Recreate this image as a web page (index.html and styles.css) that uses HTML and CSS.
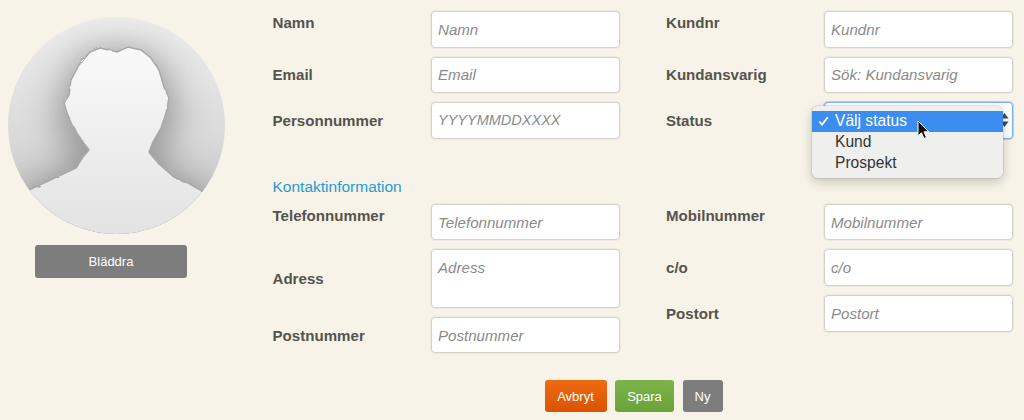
FILE: index.html
```html
<!DOCTYPE html>
<html lang="sv">
<head>
<meta charset="utf-8">
<title>Kund</title>
<link rel="stylesheet" href="styles.css">
</head>
<body>
<div class="page">
  <aside class="photo">
    <svg class="avatar" width="217" height="217" viewBox="8 17 217 217" aria-hidden="true">
      <defs>
        <linearGradient id="bg" x1="0" y1="0" x2="0" y2="1">
          <stop offset="0" stop-color="#ededed"/>
          <stop offset="0.55" stop-color="#dadada"/>
          <stop offset="1" stop-color="#bdbdbd"/>
        </linearGradient>
        <linearGradient id="fig" x1="0" y1="0" x2="0" y2="1">
          <stop offset="0" stop-color="#f9f9f9"/>
          <stop offset="1" stop-color="#e2e2e3"/>
        </linearGradient>
        <clipPath id="disc"><circle cx="116.500" cy="125.500" r="108.500"/></clipPath>
        <filter id="soft" x="-40%" y="-40%" width="180%" height="180%"><feGaussianBlur stdDeviation="17"/></filter>
        <filter id="rough" x="-5%" y="-5%" width="110%" height="110%">
          <feTurbulence type="fractalNoise" baseFrequency="0.13" numOctaves="2" seed="4"/>
          <feDisplacementMap in="SourceGraphic" scale="3"/>
          <feGaussianBlur stdDeviation="0.6"/>
        </filter>
      </defs>
      <g clip-path="url(#disc)">
        <rect x="8" y="17" width="217" height="217" fill="url(#bg)"/>
        <path transform="translate(0 10)" d="M30 189L63 173L75 168L82 157L88 150L82 142L72 125L68 113L65 103L70 95L72 80L80 65L90 52L100 48L117 52L128 47L140 50L150 58L158 70L163 87L168 98L165 113L160 128L152 142L148 152L157 163L173 177L187 183L203 191L203 240L30 240Z" fill="#7c7c7c" stroke="#7c7c7c" stroke-width="20" opacity="0.68" filter="url(#soft)"/>
        <g filter="url(#rough)">
          <path d="M29 190L63 174L76 168L83 157L89 150L83 142L72 125L67 113L64 103L69 95L71 80L79 65L90 52L100 48L117 52L128 47L141 50L151 58L159 70L164 87L169 98L166 113L161 128L153 142L149 152L158 163L174 177L188 183L204 192L230 240L10 240Z" fill="url(#fig)" stroke="#a8a8a8" stroke-width="1.500"/>
        </g>
      </g>
    </svg>
    <button class="btn btn-browse" type="button">Bläddra</button>
  </aside>

  <main class="content">
    <section class="grid">
      <div class="col">
        <div class="row"><label class="lbl lbl-high">Namn</label><input class="field" placeholder="Namn"></div>
        <div class="row"><label class="lbl">Email</label><input class="field" placeholder="Email"></div>
        <div class="row"><label class="lbl">Personnummer</label><input class="field field-date" placeholder="YYYYMMDDXXXX"></div>
      </div>
      <div class="col">
        <div class="row"><label class="lbl lbl-high">Kundnr</label><input class="field" placeholder="Kundnr"></div>
        <div class="row"><label class="lbl">Kundansvarig</label><input class="field" placeholder="Sök: Kundansvarig"></div>
        <div class="row">
          <label class="lbl">Status</label>
          <div class="select">
            <svg class="updown" width="9" height="16" viewBox="0 0 9 16" aria-hidden="true"><path d="M4.500 1L8.500 6.500H.5ZM4.500 15L.5 9.500H8.500Z" fill="#4a4a4a"/></svg>
            <div class="menu">
              <div class="opt opt-on"><svg class="tick" width="11" height="10" viewBox="0 0 11 10" aria-hidden="true"><path d="M1.200 5.500L4 8.500L9.800 1.200" fill="none" stroke="#fff" stroke-width="1.800"/></svg>Välj status</div>
              <div class="opt">Kund</div>
              <div class="opt">Prospekt</div>
              <svg class="cursor" width="14" height="21" viewBox="0 0 14 21" aria-hidden="true"><path d="M1 1V16L4.500 12.800L7 18.500L9.500 17.400L7 11.800H11.800Z" fill="#111" stroke="#fff" stroke-width="1"/></svg>
            </div>
          </div>
        </div>
      </div>
    </section>

    <h2 class="heading">Kontaktinformation</h2>

    <section class="grid">
      <div class="col">
        <div class="row"><label class="lbl lbl-high">Telefonnummer</label><input class="field" placeholder="Telefonnummer"></div>
        <div class="row"><label class="lbl">Adress</label><textarea class="field area" placeholder="Adress"></textarea></div>
        <div class="row"><label class="lbl">Postnummer</label><input class="field" placeholder="Postnummer"></div>
      </div>
      <div class="col">
        <div class="row"><label class="lbl lbl-high">Mobilnummer</label><input class="field" placeholder="Mobilnummer"></div>
        <div class="row"><label class="lbl">c/o</label><input class="field" placeholder="c/o"></div>
        <div class="row"><label class="lbl">Postort</label><input class="field" placeholder="Postort"></div>
      </div>
    </section>

    <div class="actions">
      <button class="btn btn-cancel" type="button">Avbryt</button>
      <button class="btn btn-save" type="button">Spara</button>
      <button class="btn btn-new" type="button">Ny</button>
    </div>
  </main>
</div>
</body>
</html>
```
FILE: styles.css
```css
* { box-sizing: border-box; }
html, body { margin: 0; height: 100%; overflow: hidden; }
body {
  background: #f7f3e8;
  color: #54534e;
  font-family: "Liberation Sans", Arial, sans-serif;
  font-size: 15px;
}
.page { display: flex; height: 420px; }
.photo {
  width: 272.500px;
  flex: none;
  padding: 17px 0 0 8px;
  display: flex;
  flex-direction: column;
  align-items: flex-start;
}
.avatar { display: block; }
.content { flex: 1; padding-top: 11px; min-width: 0; }
.grid { display: grid; grid-template-columns: 393.500px 346.500px; }
.col { display: flex; flex-direction: column; gap: 9px; }
.row { display: flex; align-items: center; }
.lbl {
  width: 158px;
  flex: none;
  font-size: 15.100px;
  font-weight: 700;
  color: #54534e;
}
.col:first-child .lbl { width: 158.500px; }
.lbl-high { align-self: flex-start; padding-top: 3px; }
.field {
  width: 189px;
  height: 36.600px;
  flex: none;
  padding: 0 6px;
  border: 1px solid #d5d2ca;
  border-radius: 4px;
  box-shadow: 0 0 0 1px #ece9e0;
  background: #fff;
  font: italic 15.100px "Liberation Sans", Arial, sans-serif;
  color: #555;
  outline: none;
}
.field::placeholder { color: #8a8a8a; opacity: 1; }
.field-date { font-size: 14.500px; }
.area { height: 58.400px; padding-top: 9px; resize: none; display: block; }
.select {
  position: relative;
  width: 189px;
  height: 36.600px;
  flex: none;
  border: 1px solid #7fb0e6;
  border-radius: 4px;
  box-shadow: 0 0 0 1px #b7d3f0;
  background: #fff;
}
.updown { position: absolute; right: 3px; top: 9px; }
.menu {
  position: absolute;
  left: -13px;
  top: 3px;
  width: 191px;
  height: 72px;
  padding: 5px 0;
  background: #efefee;
  border-radius: 6px;
  box-shadow: 0 0 0 1px rgba(0, 0, 0, .08), 0 4px 12px rgba(0, 0, 0, .2);
  font-size: 15.600px;
  line-height: 20.500px;
  color: #333;
}
.opt { padding-left: 23px; position: relative; height: 20.800px; }
.opt-on { background: #3d8cf0; color: #fff; }
.tick { position: absolute; left: 6px; top: 5px; }
.cursor { position: absolute; left: 105px; top: 14px; }
.heading {
  margin: 39px 0 8px;
  font-size: 15.500px;
  line-height: 18px;
  font-weight: 400;
  color: #1f9bd6;
}
.btn {
  border: 0;
  border-radius: 3px;
  color: #fff;
  font: 13px "Liberation Sans", Arial, sans-serif;
  padding: 0;
}
.btn-browse {
  margin: 11px 0 0 27px;
  width: 152px;
  height: 32.500px;
  background: #7d7d7d;
}
.actions { display: flex; gap: 8.500px; margin-left: 272px; margin-top: 26.500px; }
.btn-cancel { width: 62px; height: 32.500px; background: linear-gradient(#ef6a12, #d95400); }
.btn-save { width: 59px; height: 32.500px; background: linear-gradient(#7db44a, #6aa238); }
.btn-new { width: 40px; height: 32.500px; background: #7d7d7d; }
```
